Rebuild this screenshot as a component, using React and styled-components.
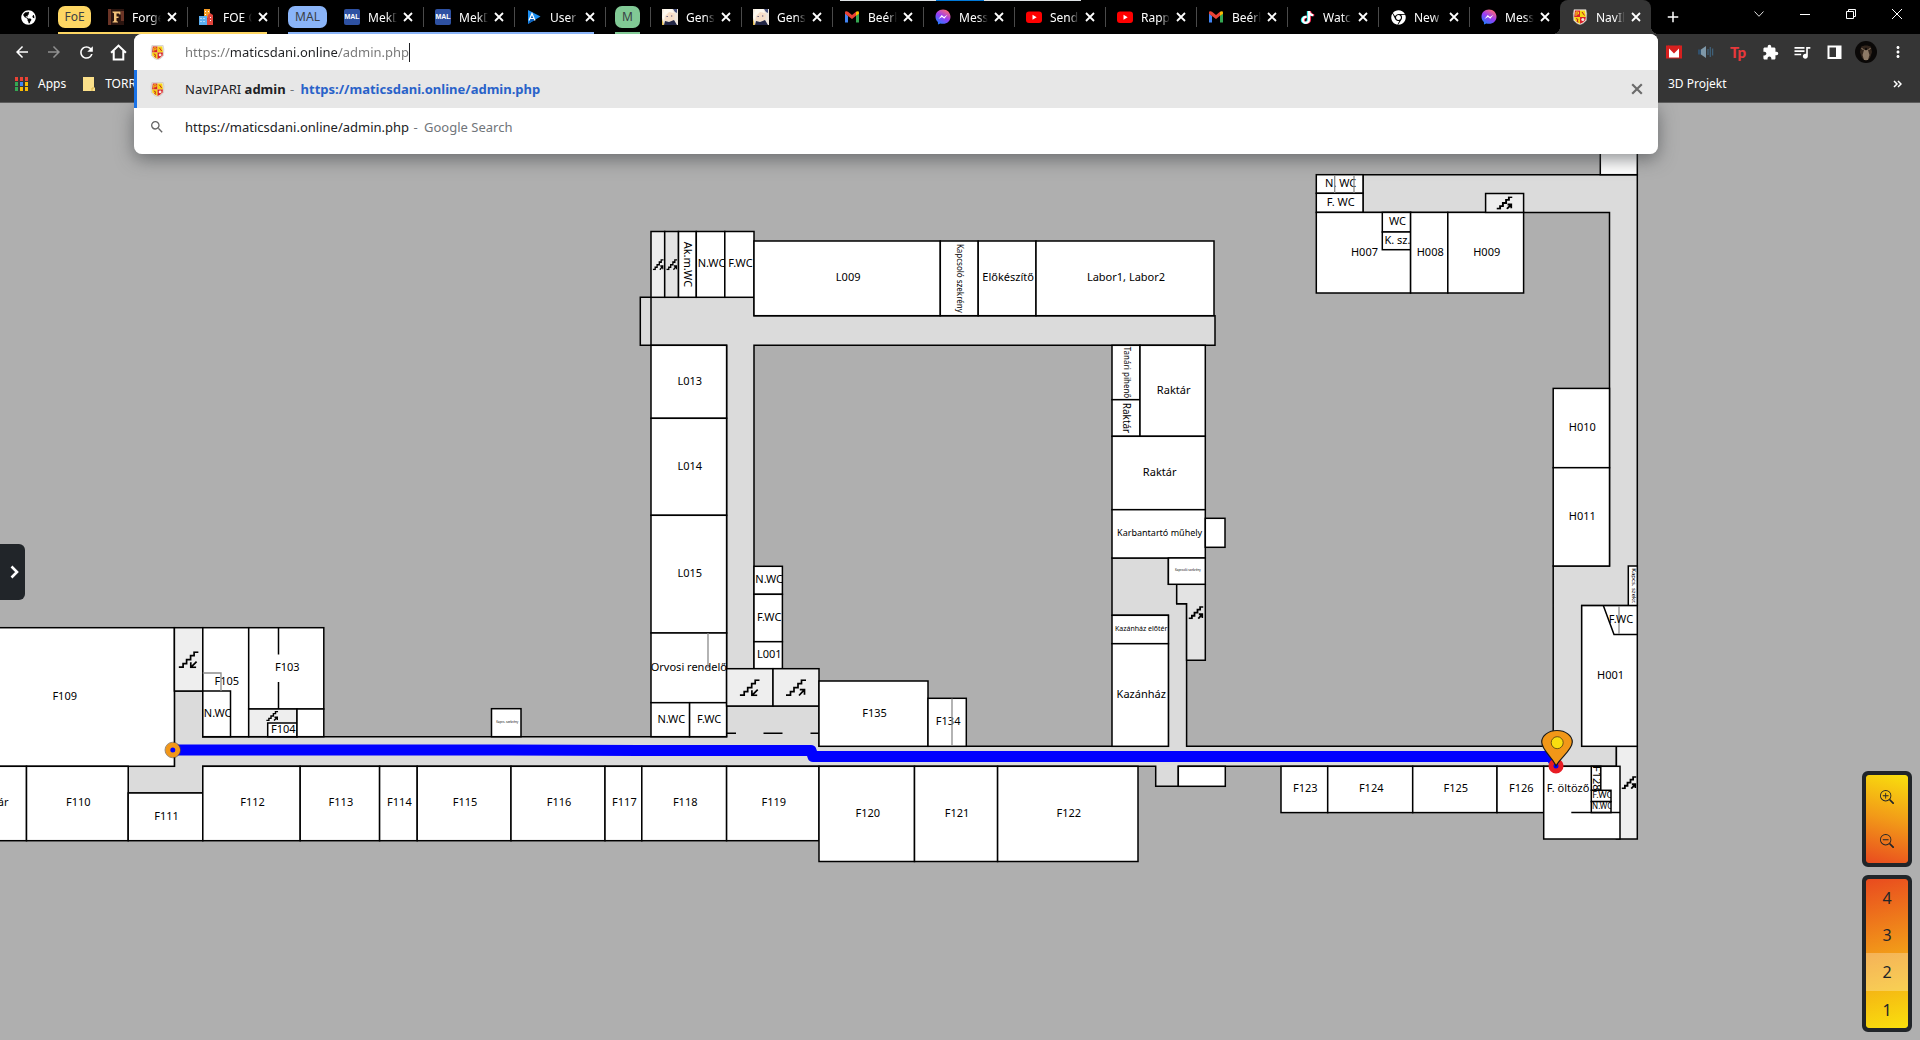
import React, { useState } from "react";
import styled, { createGlobalStyle, css } from "styled-components";
import {
  MdArrowBack,
  MdArrowForward,
  MdRefresh,
  MdExtension,
  MdQueueMusic,
  MdMoreVert,
  MdSearch,
  MdAdd,
} from "react-icons/md";
import { FaGlobeAmericas, FaChrome, FaTiktok } from "react-icons/fa";
import { BsZoomIn, BsZoomOut } from "react-icons/bs";

const GlobalStyle = createGlobalStyle`
  *, *::before, *::after { box-sizing: border-box; }
  body {
    margin: 0;
    background: #afafaf;
    font-family: "Noto Sans", "Open Sans", sans-serif;
    font-size: 13px;
    overflow: hidden;
  }
  button { font: inherit; border: 0; padding: 0; background: none; color: inherit; cursor: pointer; }
  svg { display: block; flex: none; }
`;

/* ---------- browser frame ---------- */

const Window = styled.div`
  position: relative;
  display: flex;
  flex-direction: column;
  height: 100vh;
`;

const Header = styled.header`
  background: #353535;
  color: #fff;
  border-bottom: 1px solid #5c5c5c;
  font-size: 12px;
`;

const TabStrip = styled.nav`
  position: relative;
  display: flex;
  height: 34px;
  background: #000;
`;

const ProgressHint = styled.span`
  position: absolute;
  top: 0;
  left: 840px;
  width: 241px;
  height: 1px;
  background: linear-gradient(90deg, #dfe3e6 0 96px, #0078d7 96px 144px, #dfe3e6 144px);
`;

const separator = css`
  &::before {
    content: "";
    position: absolute;
    left: 0;
    top: 7px;
    width: 1px;
    height: 20px;
    background: #4a4a4a;
  }
`;

const PinnedTab = styled.button`
  width: 48px;
  padding-left: 8px;
  display: flex;
  align-items: center;
  justify-content: center;
`;

const TabGroup = styled.div`
  position: relative;
  display: flex;
  ${separator}
  &::after {
    content: "";
    position: absolute;
    left: 10px;
    right: ${(p) => (p.$collapsed ? 10 : 11)}px;
    bottom: 0;
    height: 2px;
    background: ${(p) => p.$color};
  }
`;

const GroupChip = styled.button`
  && {
    height: 22px;
    margin: 6px ${(p) => (p.$collapsed ? 10 : 5)}px 0 10px;
    padding: 0 6px;
    border-radius: 7px;
    background: ${(p) => p.$color};
    color: #3a3f45;
    line-height: 22px;
    min-width: ${(p) => p.$width}px;
  }
`;

const TabBox = styled.div`
  position: relative;
  display: flex;
  align-items: center;
  flex: 0 1 91px;
  width: 91px;
  min-width: 0;
  padding-left: 12px;
  ${(p) => !p.$plain && !p.$active && separator}
  ${(p) =>
    p.$active &&
    css`
      background: #353535;
      border-radius: 8px 8px 0 0;
      &::before,
      &::after {
        content: "";
        position: absolute;
        bottom: 0;
        width: 8px;
        height: 8px;
      }
      &::before {
        left: -8px;
        background: radial-gradient(circle at 0 0, transparent 8px, #353535 8px);
      }
      &::after {
        right: -8px;
        background: radial-gradient(circle at 100% 0, transparent 8px, #353535 8px);
      }
    `}
`;

const TabIcon = styled.span`
  display: grid;
  place-items: center;
  width: 16px;
  flex: none;
`;

const TabTitle = styled.span`
  flex: 0 0 29px;
  width: 29px;
  margin-left: 8px;
  overflow: hidden;
  white-space: nowrap;
  mask-image: linear-gradient(90deg, #000 65%, transparent);
`;

const TabClose = styled.button`
  margin-left: 6px;
`;

const NewTab = styled.button`
  width: 28px;
  margin-left: 8px;
  display: grid;
  place-items: center;
  font-size: 18px;
`;

const WindowControls = styled.div`
  display: flex;
  margin-left: auto;
`;

const WindowButton = styled.button`
  width: 46px;
  height: 28px;
  display: grid;
  place-items: center;
`;

const Toolbar = styled.div`
  display: flex;
  align-items: center;
  justify-content: space-between;
  height: 36px;
  padding: 0 6px;
`;

const IconSet = styled.div`
  display: flex;
`;

const IconButton = styled.button`
  width: 32px;
  height: 32px;
  display: grid;
  place-items: center;
  font-size: ${(p) => p.$size || 18}px;
  opacity: ${(p) => (p.$dim ? 0.45 : 1)};
`;

const Bookmarks = styled.div`
  display: flex;
  justify-content: space-between;
  height: 32px;
  padding-bottom: 5px;
`;

const BookmarkSide = styled.div`
  display: flex;
  align-items: center;
  gap: 17px;
  padding-left: 15px;
`;

const BookmarkTail = styled.div`
  display: flex;
  align-items: center;
  justify-content: space-between;
  width: 252px;
  padding-right: 18px;
`;

const Bookmark = styled.a`
  display: flex;
  align-items: center;
  gap: 10px;
  color: #fff;
  text-decoration: none;
`;

/* ---------- address bar popup ---------- */

const Omnibox = styled.div`
  position: absolute;
  z-index: 5;
  top: 34px;
  left: 134px;
  right: 262px;
  padding-bottom: 8px;
  border-radius: 8px;
  overflow: hidden;
  background: #fff;
`;

const OmniboxShadow = styled.div`
  position: absolute;
  z-index: 4;
  top: 103px;
  left: 134px;
  right: 262px;
  height: 51px;
  border-radius: 8px;
  box-shadow: 0 5px 18px rgba(60, 64, 67, 0.6);
  clip-path: inset(0 -30px -40px -30px);
`;

const OmniRow = styled.div`
  display: flex;
  align-items: center;
  height: ${(p) => (p.$field ? 36 : 38)}px;
  padding: 0 15px;
  gap: 20px;
  color: #202124;
  background: ${(p) => (p.$selected ? "#e7e7e7" : "#fff")};
  box-shadow: ${(p) => (p.$selected ? "inset 3px 0 #1a73e8" : "none")};
`;

const RowIcon = styled.span`
  display: grid;
  place-items: center;
  width: 16px;
`;

const AddressWrap = styled.label`
  display: flex;
  align-items: center;
`;

const AddressInput = styled.input`
  field-sizing: content;
  border: 0;
  padding: 0;
  outline: 0;
  font: inherit;
  color: transparent;
  background: linear-gradient(90deg, #757575 0 46px, #202124 46px 154px, #757575 154px);
  background-clip: text;
  -webkit-background-clip: text;
`;

const Caret = styled.span`
  width: 1px;
  height: 19px;
  background: #202124;
`;

const Suggestion = styled.a`
  flex: 1;
  color: inherit;
  text-decoration: none;
  white-space: nowrap;
`;

const Muted = styled.span`
  color: #70757a;
`;

const Dash = styled(Muted)`
  margin: 0 3px 0 1px;
`;

const UrlMatch = styled.b`
  color: #2962c9;
`;

const RemoveButton = styled.button`
  && {
    color: #6b6b6b;
  }
`;

/* ---------- page ---------- */

const Page = styled.main`
  position: relative;
  flex: 1;
  min-height: 0;
  overflow: hidden;
  background: #afafaf;
`;

const MapCanvas = styled.svg`
  width: 100%;
  height: 100%;
`;

const RoomLabel = styled.text`
  font-family: "Noto Sans", sans-serif;
  font-size: ${(p) => p.$size}px;
  text-anchor: middle;
  fill: #000;
`;

const SideToggle = styled.button`
  && {
    position: absolute;
    left: 0;
    top: 441px;
    width: 25px;
    height: 56px;
    padding-left: 4px;
    display: grid;
    place-items: center;
    border-radius: 0 6px 6px 0;
    background: #212529;
    color: #fff;
  }
`;

const MapControls = styled.aside`
  position: absolute;
  right: 8px;
  bottom: 8px;
  display: flex;
  flex-direction: column;
  gap: 8px;
`;

const ControlPanel = styled.div`
  display: flex;
  flex-direction: column;
  width: 50px;
  overflow: hidden;
  border: 4px solid #212529;
  border-radius: 6px;
  color: #212529;
  background: #212529;
`;

const PanelFace = styled.div`
  display: flex;
  flex-direction: column;
  border-radius: 3px;
  overflow: hidden;
  background: linear-gradient(${(p) => p.$angle}deg, #f9e00d, #f29a18 50%, #e94b1f);
`;

const ZoomButton = styled.button`
  height: 44px;
  display: grid;
  place-items: center;
  font-size: 14px;
`;

const FloorButton = styled.button`
  && {
    height: ${(p) => (p.$current ? 38 : 37)}px;
    font-size: 16px;
    background: ${(p) => (p.$current ? "rgba(255,255,255,0.28)" : "none")};
  }
`;

/* ---------- icons ---------- */

const Icon16 = ({ children, size = 16 }) => (
  <svg width={size} height={size} viewBox="0 0 16 16" aria-hidden="true">
    {children}
  </svg>
);

const CloseIcon = ({ size = 10 }) => (
  <svg width={size} height={size} viewBox="0 0 10 10" aria-hidden="true">
    <path d="M1 1L9 9M9 1L1 9" stroke="currentColor" strokeWidth="1.800" />
  </svg>
);

const Crest = ({ size = 16 }) => (
  <Icon16 size={size}>
    <path d="M2 .5h12l.8 4-.4 7L11 14.600 8 15.800 5 14.600 1.600 11.500 1.200 4.500z" fill="#f3e7d8" stroke="#aaa" strokeWidth=".4" />
    <path d="M3 1.500h5v6.500H2.200z" fill="#d8202a" />
    <path d="M8 1.500h5l.8 6.500H8z" fill="#f6d514" />
    <path d="M2.200 8H8v6.800L5.300 13.600 2.600 11z" fill="#f6d514" />
    <path d="M8 8h5.800l-.4 3-2.700 2.600L8 14.800z" fill="#d8202a" />
    <path d="M4 7V3h2.500v2H4.500" stroke="#f6d514" strokeWidth="1" fill="none" />
    <path d="M10 3l2.500 3.500M4 9.500l2 1-1 2 1.500.5" stroke="#c01c22" strokeWidth="1" fill="none" />
    <circle cx="10.800" cy="10.600" r="1.500" fill="#f3e8de" />
  </Icon16>
);

const ForgeIcon = () => (
  <Icon16>
    <path d="M0 0h16v16H0z" fill="#2b1510" />
    <path d="M0 0h3v16H0zM13 2h3v10h-3z" fill="#6a3426" />
    <path d="M4.500 2.500h8v3h-1l-.5-1H8.500v3h2v1.500h-2V12l1.500.8v.8H4.500v-.8L6 12V4.300l-1.500-.8z" fill="#f3c27a" />
  </Icon16>
);

const CityIcon = () => (
  <Icon16>
    <path d="M5 0h6v9H5z" fill="#f59a23" />
    <path d="M0 7h8v9H0z" fill="#5aaef0" />
    <path d="M9 6l2-2 3 2v10H8v-6z" fill="#e2453c" />
    <path d="M6 2h1v1H6zM9 2h1v1H9zM6 5h1v1H6zM1.500 9h1v1h-1zM4.500 9h1v1h-1zM1.500 12h1v1h-1zM4.500 12h1v1h-1zM11 8h1v1h-1zM11 11h1v1h-1z" fill="#fff" />
  </Icon16>
);

const MalText = styled.text`
  font: 700 7px "Liberation Sans", sans-serif;
  text-anchor: middle;
  fill: #fff;
`;

const MalIcon = () => (
  <Icon16>
    <rect width="16" height="16" rx="2" fill="#2e51a2" />
    <MalText x="8" y="10">MAL</MalText>
  </Icon16>
);

const UserIcon = () => (
  <Icon16>
    <path d="M2 1l12.500 6.500L2 15z" fill="#1b8ff2" />
    <path d="M2 15l3.500-8 4 3.500z" fill="#0d5fb8" />
    <path d="M3 11.500l3-7 3 7M4.500 9.500h3" stroke="#fff" strokeWidth="1.200" fill="none" />
  </Icon16>
);

const AnimeIcon = () => (
  <Icon16>
    <path d="M0 0h16v16H0z" fill="#efe6dc" />
    <path d="M1 1h9l3 5-1 6H3L1 8z" fill="#f8dfc8" />
    <path d="M2 0h8l2 4-5-1-4 4-1 5-2-4z" fill="#fff9ef" />
    <path d="M11 0h4v4l-2-1z" fill="#46507c" />
    <path d="M2 16l1-4 4 1 5-2 3 5z" fill="#232746" />
    <path d="M4.500 7.500h1.300M9 7h1.300" stroke="#55507a" strokeWidth="1.200" />
    <path d="M0 10l2 6H0z" fill="#e3bf54" />
  </Icon16>
);

const GmailIcon = () => (
  <Icon16>
    <path d="M1 4v9.500h3V7z" fill="#4285f4" />
    <path d="M12 7v6.500h3V4z" fill="#34a853" />
    <path d="M1 3.500C1 2 2.800 1.800 4 2.800l4 3.100 4-3.100v4L8 10 1 4.800z" fill="#ea4335" />
    <path d="M12 2.800c1.200-1 3-.8 3 .7v1.300L12 7z" fill="#fbbc04" />
  </Icon16>
);

const MessengerIcon = () => (
  <Icon16>
    <defs>
      <linearGradient id="messenger" x1=".1" y1="1" x2=".7" y2="0">
        <stop offset="0" stopColor="#1187ff" />
        <stop offset=".55" stopColor="#9a3cf5" />
        <stop offset="1" stopColor="#ff6a74" />
      </linearGradient>
    </defs>
    <path d="M8 .5C3.600.5.5 3.600.5 7.700c0 2.200.9 4.100 2.400 5.400L3 15.500l2.400-1.100c.8.2 1.700.4 2.600.4 4.400 0 7.500-3.100 7.500-7.100S12.400.5 8 .5z" fill="url(#messenger)" />
    <path d="M3.500 10l3.200-4 2.300 1.900L12.500 5.800 9.300 9.700 7 7.900z" fill="#fff" />
  </Icon16>
);

const YouTubeIcon = () => (
  <Icon16>
    <rect y="2.500" width="16" height="11.500" rx="3" fill="#f00" />
    <path d="M6.500 5.800v4.900l4.200-2.450z" fill="#fff" />
  </Icon16>
);

const TikTokBox = styled.span`
  font-size: 13px;
  filter: drop-shadow(-1px 0 #25f4ee) drop-shadow(1px 0 #fe2c55);
`;

const HomeIcon = () => (
  <svg width="17" height="17" viewBox="0 0 16 16" aria-hidden="true">
    <path d="M1 8.200L8 1.500l7 6.700M3.500 6.500V14.500h9V6.500" fill="none" stroke="#fff" strokeWidth="1.900" />
  </svg>
);

const MailBadge = () => (
  <Icon16>
    <path d="M0 1.500h16v13H0z" fill="#d6201f" />
    <path d="M3 3v10.500h10V3L8 8z" fill="#fff" />
    <path d="M2 2l6 6 6-6" stroke="#d6201f" strokeWidth="2" fill="none" />
  </Icon16>
);

const SpeakerIcon = () => (
  <Icon16>
    <path d="M0 5.500h3v5H0z" fill="#31506c" />
    <path d="M3 5.500L8 2v12l-5-3.500z" fill="#7f98a8" />
    <path d="M10 5v6M12.300 3v10M14.600 4.500v7" stroke="#3f6079" strokeWidth="1.300" />
  </Icon16>
);

const TpMark = styled.b`
  color: #e8383b;
  font: 900 15px "Lato", "Noto Sans", sans-serif;
`;

const SidePanelIcon = () => (
  <Icon16>
    <path d="M2.500 2.500h12v11.500h-12z" fill="none" stroke="#fff" strokeWidth="2" />
    <path d="M10 2h5v12h-5z" fill="#fff" />
  </Icon16>
);

const AvatarIcon = () => (
  <svg width="22" height="22" viewBox="0 0 22 22" aria-hidden="true">
    <circle cx="11" cy="11" r="11" fill="#0a0807" />
    <path d="M6 6c2-2 8-2 10 0l1 5-2 6-4 3-4-3-2-6z" fill="#33261d" />
    <path d="M9 9c1-1.500 3-1.500 4 0l1.500 5-1.500 5H9l-1.500-5z" fill="#8d7a67" />
    <path d="M6.500 7l2 2M15.500 7l-2 2" stroke="#a08a72" />
    <circle cx="11" cy="8" r="1.300" fill="#120d0a" />
  </svg>
);

const AppsIcon = () => (
  <svg width="13" height="14" viewBox="0 0 13 14" aria-hidden="true">
    {["#ea4335", "#ea4335", "#ea4335", "#34a853", "#4285f4", "#fbbc04", "#34a853", "#fbbc04", "#fbbc04"].map((c, i) => (
      <rect key={i} x={(i % 3) * 5} y={Math.floor(i / 3) * 5} width="3" height="4" fill={c} />
    ))}
  </svg>
);

const FolderIcon = () => (
  <svg width="12" height="14" viewBox="0 0 12 14" aria-hidden="true">
    <path d="M0 0h11v10l1 1v3H0z" fill="#fbe08a" />
    <path d="M9 14v-3h2" stroke="#d9b44a" fill="none" />
  </svg>
);

/* ---------- floor plan data ---------- */

// [x1, y1, x2, y2, label, options]
const rooms = [
  [651, 231.5, 664.7, 297.3, "", { fill: "#eee" }],
  [664.7, 231.5, 678.5, 297.3, "", { fill: "#e3e3e3" }],
  [678.5, 231.5, 696.3, 297.3, "Ak.m.WC", { rotate: true, size: 11 }],
  [696.3, 231.5, 724.8, 297.3, "N.WC"],
  [724.8, 231.5, 754, 297.3, "F.WC"],
  [754, 241, 940.3, 315.7, "L009"],
  [940.3, 241, 978.2, 315.7, "Kapcsoló szekrény", { rotate: true, size: 8 }],
  [978.2, 241, 1036, 315.7, "Előkészítő"],
  [1036, 241, 1214, 315.7, "Labor1, Labor2"],
  [651, 345.3, 726.6, 418.3, "L013"],
  [651, 418.3, 726.6, 515.3, "L014"],
  [651, 515.3, 726.6, 633, "L015"],
  [651, 633, 726.6, 702.7, "Orvosi rendelő", { free: true }],
  [651, 702.7, 689.6, 736.7, "N.WC"],
  [689.6, 702.7, 726.6, 736.7, "F.WC"],
  [754, 566.3, 782.4, 594.3, "N.WC"],
  [754, 594.3, 782.4, 641.7, "F.WC"],
  [754, 641.7, 782.4, 668.7, "L001"],
  [726.6, 668.7, 773, 706, "", { fill: "#eee" }],
  [773, 668.7, 819, 706, "", { fill: "#eee" }],
  [819, 681, 928, 746.3, "F135"],
  [928, 698.3, 966.3, 746.3, "F134"],
  [1112, 345.3, 1140, 399.7, "Tanári pihenő", { rotate: true, size: 8 }],
  [1112, 399.7, 1140, 436.3, "Raktár", { rotate: true, size: 10 }],
  [1140, 345.3, 1205.3, 436.3, "Raktár"],
  [1112, 436.3, 1205.3, 509.7, "Raktár"],
  [1112, 509.7, 1205.3, 558, "Karbantartó műhely", { size: 9 }],
  [1205.3, 518.3, 1225, 547.3, ""],
  [1168.4, 558, 1205.3, 584.3, "Kapcsoló szekrény", { size: 3 }],
  [1112, 615.3, 1168.4, 643.7, "Kazánház előtér", { size: 7 }],
  [1112, 643.7, 1168.4, 746.3, "Kazánház"],
  [-47, 627.7, 174.4, 766.3, "F109"],
  [174.4, 627.7, 202.8, 691, "", { fill: "#eee" }],
  [202.8, 627.7, 248.7, 736.7, "F105"],
  [202.8, 691, 230.5, 736.7, "N.WC"],
  [248.7, 627.7, 323.8, 709, "F103"],
  [248.7, 709, 297, 736.7, "", { fill: "#eee" }],
  [267.7, 723, 297, 736.7, "F104"],
  [297, 709, 323.8, 736.7, ""],
  [491.5, 708.7, 521, 736.7, "Kapcs. szekrény", { size: 3 }],
  [-45, 766.3, 26.5, 840.7, "Raktár"],
  [26.5, 766.3, 128.2, 840.7, "F110"],
  [128.2, 793, 202.8, 840.7, "F111"],
  [202.8, 766.3, 300.2, 840.7, "F112"],
  [300.2, 766.3, 379.6, 840.7, "F113"],
  [379.6, 766.3, 417.2, 840.7, "F114"],
  [417.2, 766.3, 511, 840.7, "F115"],
  [511, 766.3, 605, 840.7, "F116"],
  [605, 766.3, 641.8, 840.7, "F117"],
  [641.8, 766.3, 726.6, 840.7, "F118"],
  [726.6, 766.3, 819, 840.7, "F119"],
  [819, 766.3, 914.5, 861.5, "F120"],
  [914.5, 766.3, 997.6, 861.5, "F121"],
  [997.6, 766.3, 1138, 861.5, "F122"],
  [1178.3, 766.3, 1225.3, 786.3, ""],
  [1281, 766.3, 1327.7, 812.6, "F123"],
  [1327.7, 766.3, 1412.7, 812.6, "F124"],
  [1412.7, 766.3, 1497, 812.6, "F125"],
  [1497, 766.3, 1543.7, 812.6, "F126"],
  [1616.4, 746.3, 1637.3, 839, "", { fill: "#eee" }],
  [1543.7, 766.3, 1620, 839, "F. öltöző", { at: [1568, 789] }],
  [1591.3, 766.3, 1600.8, 790.3, "F128", { rotate: true, size: 11 }],
  [1591.3, 790.3, 1611, 801.6, "F.WC", { size: 9 }],
  [1591.3, 801.6, 1611, 812.6, "N.WC", { size: 8 }],
  [1600.3, 120, 1637.3, 174.7, "WC", { at: [1620, 151] }],
  [1316.3, 174.7, 1363, 193.3, "N. WC"],
  [1316.3, 193.3, 1363, 212.4, "F. WC"],
  [1316.3, 212.4, 1410.6, 293, "H007"],
  [1382.3, 212.4, 1410.6, 232, "WC"],
  [1382.3, 232, 1410.6, 249.7, "K. sz."],
  [1410.6, 212.4, 1447.8, 293, "H008"],
  [1447.8, 212.4, 1523.6, 293, "H009"],
  [1485.6, 193.5, 1523.6, 212.4, "", { fill: "#eee" }],
  [1553.2, 388.4, 1609.5, 467.7, "H010"],
  [1553.2, 467.7, 1609.5, 566, "H011"],
  [1628.3, 566, 1637.3, 605.6, "Kapcs. szekr.", { rotate: true, size: 6 }],
  [1581.7, 605.6, 1637.3, 746.3, "H001"],
];

const corridors = [
  "M640.3 297.3H754V315.700H1215V345.300H754V668.700H726.600V345.300H640.300Z",
  "M174.400 691H202.800V736.700H726.600V706H819V746.300H1168.400V615.300H1112V558H1168.400V584.300H1176.700V603.700H1186.600V746.300H1553.200V566H1609.500V212.400H1363V174.700H1637.300V605.600H1581.700V746.300H1616.400V766.300H1178.300V786.300H1155.700V766.300H202.800V793H128.200V766.300H174.400Z",
];

// [centre x, centre y, width, height, direction]
const stairs = [
  [658.2, 264.7, 11, 11, "up"],
  [671.8, 264.7, 11, 11, "up"],
  [749.7, 687.7, 20, 17, "down"],
  [796, 687.7, 20, 17, "up"],
  [1196, 612.7, 15, 13, "up"],
  [188.6, 659.7, 20, 17, "down"],
  [272.2, 716, 12, 10, "up"],
  [1504.5, 203, 16, 13, "up"],
  [1629, 782.7, 15, 13, "up"],
];

const Room = ({ data }) => {
  const [x1, y1, x2, y2, label, o = {}] = data;
  const w = x2 - x1;
  const h = y2 - y1;
  const size = o.size || 11;
  const cx = o.at ? o.at[0] - x1 : w / 2 + (o.free ? 0 : 1);
  const cy = o.at ? o.at[1] - y1 : h / 2;
  const baseline = o.rotate ? Math.round(size * 0.36) : Math.round(size * 0.36) - 1;
  return (
    <g>
      <rect x={x1} y={y1} width={w} height={h} fill={o.fill || "#fff"} />
      {label && (
        <svg x={x1} y={y1} width={w} height={h} overflow={o.free ? "visible" : "hidden"}>
          <g transform={`translate(${cx} ${cy})${o.rotate ? " rotate(90)" : ""}`}>
            <RoomLabel $size={size} y={baseline}>
              {label}
            </RoomLabel>
          </g>
        </svg>
      )}
      <rect x={x1} y={y1} width={w} height={h} fill="none" stroke="#000" strokeWidth="1.5" />
    </g>
  );
};

const Stairs = ({ data: [cx, cy, w, h, dir] }) => (
  <svg x={cx - w / 2} y={cy - h / 2} width={w} height={h} viewBox="0 0 20 17" preserveAspectRatio="none">
    <g fill="none" stroke="#000" strokeWidth={w < 18 ? 2.4 : 1.7}>
      <path d="M0 16H4.500V12.500H8V8.500H12V4.500H15.500V.9H20" />
      {dir === "up" ? <path d="M13 16.300L18 11M13.800 10.500H18.500V15.500" /> : <path d="M18 10.500L12.500 16M12.200 11V16.200H17.500" />}
    </g>
  </svg>
);

const FloorPlan = () => (
  <MapCanvas role="img" aria-label="Floor plan">
    <g transform="translate(0 -103)">
      <g fill="#dbdbdb" stroke="#000" strokeWidth="1.5">
        {corridors.map((d) => (
          <path key={d} d={d} />
        ))}
      </g>
      <path d="M1176.700 584.300H1205.300V660.300H1186.600V603.700H1176.700Z" fill="#e3e3e3" stroke="#000" strokeWidth="1.5" />
      {rooms.map((r, i) => (
        <Room key={i} data={r} />
      ))}
      <g fill="none" stroke="#000" strokeWidth="1.5">
        <path d="M651 297V345.500M726.600 733.300H736M763.500 733.300H782.500M810.500 733.300H819" />
        <path d="M278.500 628V654.500M278.500 682V709M1571.300 812.600H1620M1603.300 605.600L1614 634.600H1637.300" />
      </g>
      <g fill="none" stroke="#8c8c8c" strokeWidth="1.3">
        <path d="M708 633V668M202.800 673H221V691M952 698.500V746M1334.700 175V193M1354 175V193M1619 606V634" />
      </g>
      <RoomLabel $size={11} x="1621" y="623">
        F.WC
      </RoomLabel>
      {stairs.map((s, i) => (
        <Stairs key={i} data={s} />
      ))}
      <path
        d="M173 750H500L640 750.500H811L813 756.500H1551L1556 765"
        fill="none"
        stroke="#00f"
        strokeWidth="11"
        strokeLinejoin="round"
      />
      <circle cx="172.800" cy="750" r="5" fill="#00f" stroke="#f29718" strokeWidth="5" />
      <circle cx="172.800" cy="750" r="7.800" fill="none" stroke="#5a4630" strokeWidth=".6" />
      <circle cx="1556" cy="766" r="5" fill="#00f" stroke="#e81c24" strokeWidth="5" />
      <path
        d="M1556 766C1553 758 1541.700 750 1541.700 742A15.300 11.500 0 0 1 1572.300 742C1572.300 750 1560 758 1556 766Z"
        fill="#f29718"
        stroke="#1b1b1b"
        strokeWidth="1.200"
      />
      <circle cx="1557.200" cy="742.700" r="6" fill="#f9dd10" stroke="#4a3c10" strokeWidth=".8" />
    </g>
  </MapCanvas>
);

/* ---------- tabs ---------- */

const Tab = ({ icon, title, active, plain }) => (
  <TabBox $active={active} $plain={plain}>
    <TabIcon>{icon}</TabIcon>
    <TabTitle>{title}</TabTitle>
    <TabClose aria-label={`Close ${title}`}>
      <CloseIcon />
    </TabClose>
  </TabBox>
);

const looseTabs = [
  ["Gens", <AnimeIcon />],
  ["Gens", <AnimeIcon />],
  ["Beérk", <GmailIcon />],
  ["Mess", <MessengerIcon />],
  ["Send", <YouTubeIcon />],
  ["Rapp", <YouTubeIcon />],
  ["Beérk", <GmailIcon />],
  ["Watc", <TikTokBox><FaTiktok /></TikTokBox>],
  ["New", <FaChrome size={15} />],
  ["Mess", <MessengerIcon />],
];

export default function App() {
  const [floor, setFloor] = useState(2);
  const [address, setAddress] = useState("https://maticsdani.online/admin.php");

  return (
    <Window>
      <GlobalStyle />
      <Header>
        <TabStrip>
          <PinnedTab aria-label="Pinned tab">
            <FaGlobeAmericas size={15} />
          </PinnedTab>
          <TabGroup $color="#fdd663">
            <GroupChip $color="#fdd663" $width={33}>FoE</GroupChip>
            <Tab plain title="Forge" icon={<ForgeIcon />} />
            <Tab title="FOE C" icon={<CityIcon />} />
          </TabGroup>
          <TabGroup $color="#8ab4f8">
            <GroupChip $color="#8ab4f8" $width={39}>MAL</GroupChip>
            <Tab plain title="MekD" icon={<MalIcon />} />
            <Tab title="MekD" icon={<MalIcon />} />
            <Tab title="User" icon={<UserIcon />} />
          </TabGroup>
          <TabGroup $color="#81c995" $collapsed>
            <GroupChip $color="#81c995" $width={25} $collapsed>M</GroupChip>
          </TabGroup>
          {looseTabs.map(([title, icon], i) => (
            <Tab key={i} title={title} icon={icon} />
          ))}
          <Tab active title="NavIl" icon={<Crest />} />
          <NewTab aria-label="New tab">
            <MdAdd />
          </NewTab>
          <WindowControls>
            <WindowButton aria-label="Search tabs">
              <svg width="10" height="6" viewBox="0 0 10 6"><path d="M.5.5L5 5.300 9.500.5" fill="none" stroke="#ddd" /></svg>
            </WindowButton>
            <WindowButton aria-label="Minimize">
              <svg width="10" height="1" viewBox="0 0 10 1"><path d="M0 .5H10" stroke="#fff" /></svg>
            </WindowButton>
            <WindowButton aria-label="Restore">
              <svg width="10" height="10" viewBox="0 0 10 10"><path d="M.5 2.500h7v7h-7zM2.500 2.500v-2h7v7h-2" fill="none" stroke="#fff" /></svg>
            </WindowButton>
            <WindowButton aria-label="Close window">
              <svg width="10" height="10" viewBox="0 0 10 10"><path d="M0 0L10 10M10 0L0 10" stroke="#fff" /></svg>
            </WindowButton>
          </WindowControls>
          <ProgressHint />
        </TabStrip>

        <Toolbar>
          <IconSet>
            <IconButton aria-label="Back"><MdArrowBack /></IconButton>
            <IconButton aria-label="Forward" $dim><MdArrowForward /></IconButton>
            <IconButton aria-label="Reload" $size={19}><MdRefresh /></IconButton>
            <IconButton aria-label="Home"><HomeIcon /></IconButton>
          </IconSet>
          <IconSet>
            <IconButton aria-label="Mail checker"><MailBadge /></IconButton>
            <IconButton aria-label="Volume"><SpeakerIcon /></IconButton>
            <IconButton aria-label="Extension"><TpMark>Tp</TpMark></IconButton>
            <IconButton aria-label="Extensions" $size={17}><MdExtension /></IconButton>
            <IconButton aria-label="Media" $size={20}><MdQueueMusic /></IconButton>
            <IconButton aria-label="Side panel"><SidePanelIcon /></IconButton>
            <IconButton aria-label="Profile"><AvatarIcon /></IconButton>
            <IconButton aria-label="Menu"><MdMoreVert /></IconButton>
          </IconSet>
        </Toolbar>

        <Bookmarks>
          <BookmarkSide>
            <Bookmark href="#apps"><AppsIcon />Apps</Bookmark>
            <Bookmark href="#torrent"><FolderIcon />TORRENT</Bookmark>
          </BookmarkSide>
          <BookmarkTail>
            <Bookmark href="#3d">3D Projekt</Bookmark>
            <button aria-label="More bookmarks">
              <svg width="9" height="8" viewBox="0 0 9 8"><path d="M1 1l3 3-3 3M5 1l3 3-3 3" fill="none" stroke="#fff" strokeWidth="1.500" /></svg>
            </button>
          </BookmarkTail>
        </Bookmarks>
      </Header>

      <OmniboxShadow />
      <Omnibox>
        <OmniRow $field>
          <RowIcon><Crest size={15} /></RowIcon>
          <AddressWrap>
            <AddressInput aria-label="Address" value={address} onChange={(e) => setAddress(e.target.value)} spellCheck={false} />
            <Caret />
          </AddressWrap>
        </OmniRow>
        <OmniRow $selected>
          <RowIcon><Crest size={15} /></RowIcon>
          <Suggestion href="#admin">
            NavIPARI <b>admin</b> <Dash>-</Dash> <UrlMatch>https://maticsdani.online/admin.php</UrlMatch>
          </Suggestion>
          <RemoveButton aria-label="Remove suggestion"><CloseIcon size={12} /></RemoveButton>
        </OmniRow>
        <OmniRow>
          <RowIcon><MdSearch size={16} color="#666" /></RowIcon>
          <Suggestion href="#search">
            https://maticsdani.online/admin.php <Dash>-</Dash> <Muted>Google Search</Muted>
          </Suggestion>
        </OmniRow>
      </Omnibox>

      <Page>
        <FloorPlan />
        <SideToggle aria-label="Open side menu">
          <svg width="10" height="14" viewBox="0 0 10 14"><path d="M1.500 1.500L7 7l-5.500 5.500" fill="none" stroke="#fff" strokeWidth="2.600" /></svg>
        </SideToggle>
        <MapControls>
          <ControlPanel>
            <PanelFace $angle={195}>
              <ZoomButton aria-label="Zoom in"><BsZoomIn /></ZoomButton>
              <ZoomButton aria-label="Zoom out"><BsZoomOut /></ZoomButton>
            </PanelFace>
          </ControlPanel>
          <ControlPanel>
            <PanelFace $angle={-15}>
              {[4, 3, 2, 1].map((n) => (
                <FloorButton key={n} $current={n === floor} onClick={() => setFloor(n)}>
                  {n}
                </FloorButton>
              ))}
            </PanelFace>
          </ControlPanel>
        </MapControls>
      </Page>
    </Window>
  );
}
